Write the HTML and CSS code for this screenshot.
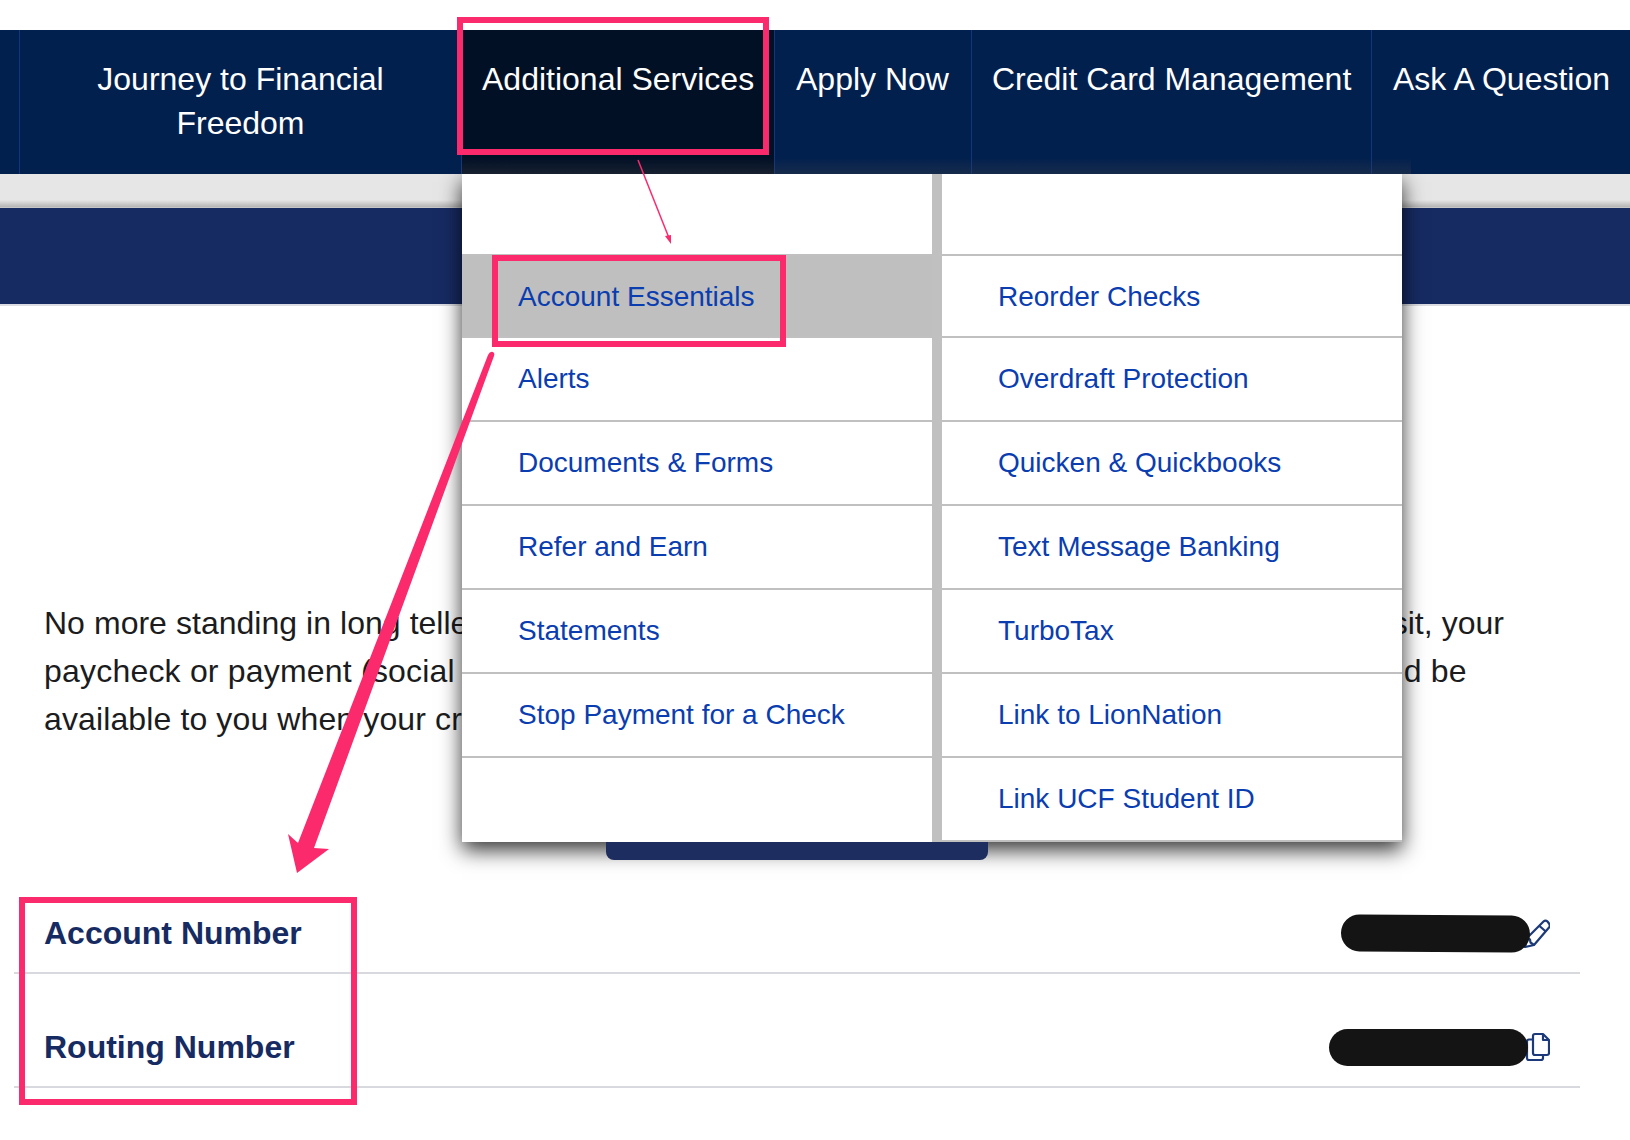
FILE: index.html
```html
<!DOCTYPE html>
<html lang="en">
<head>
  <meta charset="UTF-8">
  <meta name="viewport" content="width=device-width, initial-scale=1.0">
  <title>Account Essentials</title>
  <link rel="stylesheet" href="styles.css">
</head>
<body>
  <nav class="nav">
    <div class="nav-stub"></div>
    <a class="nav-item nav-journey">Journey to Financial Freedom</a>
    <a class="nav-item nav-active">Additional Services</a>
    <a class="nav-item nav-apply">Apply Now</a>
    <a class="nav-item nav-credit">Credit Card Management</a>
    <a class="nav-item nav-last">Ask A Question</a>
  </nav>

  <div class="band"></div>
  <div class="banner"></div>

  <div class="copy">
    <p class="copy-first">No more standing in long teller lines to make your monthly paycheck deposits. With direct deposit, your</p>
    <p class="copy-second">paycheck or payment (social security or pension) goes in your account automatically and should be</p>
    <p class="copy-third">available to you when your credit union opens for business.</p>
  </div>

  <div class="button-row"><a class="setup-button"></a></div>

  <section class="details">
    <div class="detail">
      <span class="detail-label">Account Number</span>
      <span class="detail-value">
        <span class="redact redact-short"></span>
        <svg class="icon icon-pencil" viewBox="0 0 26 30" fill="none" stroke="currentColor" stroke-width="2.2" stroke-linejoin="round">
          <path d="M19.5 3.5 Q21.5 1.5 23.5 3.5 L25 5.5 Q26.5 7.5 25 9.5 L10 27 L1 29 L3 20 Z"/>
          <path d="M15.5 8 L21.8 13.5"/>
          <path d="M3 20 L6 21.5 L6.5 24.5 L10 27"/>
        </svg>
      </span>
    </div>
    <div class="detail">
      <span class="detail-label">Routing Number</span>
      <span class="detail-value">
        <span class="redact redact-long"></span>
        <svg class="icon icon-copy" viewBox="0 0 26 30" fill="none" stroke="currentColor" stroke-width="2.2" stroke-linejoin="round">
          <path d="M11 2 H19 L25 8 V21 Q25 23 23 23 H11 Q9 23 9 21 V4 Q9 2 11 2 Z"/>
          <path d="M19 2 V8 H25"/>
          <path d="M9 7.5 H5 Q3 7.5 3 9.5 V26 Q3 28 5 28 H17 Q19 28 19 26 V23"/>
        </svg>
      </span>
    </div>
  </section>

  <div class="menu">
    <ul class="menu-col">
      <li class="menu-blank"></li>
      <li class="menu-hover"><a>Account Essentials</a></li>
      <li><a>Alerts</a></li>
      <li><a>Documents &amp; Forms</a></li>
      <li><a>Refer and Earn</a></li>
      <li><a>Statements</a></li>
      <li><a>Stop Payment for a Check</a></li>
      <li class="menu-blank-end"></li>
    </ul>
    <ul class="menu-col menu-col-right">
      <li class="menu-blank"></li>
      <li class="menu-first"><a>Reorder Checks</a></li>
      <li><a>Overdraft Protection</a></li>
      <li><a>Quicken &amp; Quickbooks</a></li>
      <li><a>Text Message Banking</a></li>
      <li><a>TurboTax</a></li>
      <li><a>Link to LionNation</a></li>
      <li><a>Link UCF Student ID</a></li>
    </ul>
  </div>

  <!-- markup drawn on top of the screenshot -->
  <svg class="marks" viewBox="0 0 1630 1140">
    <rect x="460" y="20" width="306" height="132" fill="none" stroke="#fb2a6d" stroke-width="6"/>
    <rect x="495" y="258" width="288" height="86" fill="none" stroke="#fb2a6d" stroke-width="6"/>
    <rect x="22" y="900" width="332" height="202" fill="none" stroke="#fb2a6d" stroke-width="6"/>
    <path d="M638 160 L669 238" stroke="#fb2a6d" stroke-width="1.5" fill="none"/>
    <path d="M671 244 L665 236 L671 235 Z" fill="#fb2a6d"/>
    <path d="M488 355 Q490 351 493 352 Q495 353 494 356 L314 848 L329 849 L297 873 L288 834 L298 843 Z" fill="#fb2a6d"/>
  </svg>
</body>
</html>
```

FILE: styles.css
```css
* {
  box-sizing: border-box;
}
body {
  margin: 0;
  height: 1140px;
  overflow: hidden;
  position: relative;
  background-color: #fff;
  color: #1b1c20;
  font-family: "Liberation Sans", Arial, sans-serif;
}
.nav {
  display: flex;
  position: relative;
  z-index: 1;
  height: 144px;
  margin-top: 30px;
  background-color: #02204e;
}
/* greyish haze at the bottom of the bar, above the open menu */
.nav::after {
  content: "";
  position: absolute;
  left: 461px;
  bottom: 0;
  width: 950px;
  height: 16px;
  background: linear-gradient(rgba(70, 70, 70, 0), rgba(70, 70, 70, 0.3));
}
.nav-stub {
  width: 19px;
  flex: none;
}
.nav-item {
  flex: none;
  padding: 27px 0 0 21px;
  border-left: 1.5px solid #12357f;
  color: #fff;
  font-size: 32px;
  line-height: 44px;
  white-space: nowrap;
}
.nav-journey {
  width: 442px;
  padding: 27px 60px 0;
  text-align: center;
  white-space: normal;
}
.nav-active {
  width: 313px;
  padding-left: 20px;
  background-color: #021026;
}
.nav-apply {
  width: 197px;
}
.nav-credit {
  width: 400px;
  padding-left: 20px;
}
.nav-last {
  flex: 1;
}
.band {
  height: 34px;
  background: linear-gradient(#e6e6e6 26px, #b4b4b4 33px, #d8d8d8 34px);
}
.banner {
  height: 98px;
  background-color: #172b63;
  border-bottom: 2px solid #dcdde2;
}
.copy {
  padding: 293px 0 0 44px;
  font-size: 32px;
  line-height: 48px;
  white-space: nowrap;
}
.copy p {
  margin: 0;
}
.copy .copy-first {
  word-spacing: 0.2px;
}
.copy .copy-second {
  letter-spacing: 0.2px;
}
.copy .copy-third {
  letter-spacing: 0.12px;
}
.button-row {
  display: flex;
  justify-content: center;
  padding: 99px 36px 0 0;
}
/* only the part below the open menu shows */
.setup-button {
  display: block;
  position: relative;
  z-index: 1;
  width: 382px;
  height: 18px;
  background-color: #1d2d5f;
  border-radius: 0 0 8px 8px;
}
.details {
  margin: 0 50px 0 14px;
}
.detail {
  display: flex;
  align-items: flex-end;
  justify-content: space-between;
  height: 114px;
  padding: 0 30px 17px 30px;
  border-bottom: 2px solid #d8d9de;
}
.detail-label {
  color: #172b63;
  font-size: 32px;
  font-weight: bold;
  line-height: 44px;
}
.detail-value {
  display: flex;
  align-items: center;
  height: 44px;
  color: #1c3a7a;
}
.redact {
  display: block;
  height: 37px;
  background-color: #141414;
  border-radius: 19px;
  position: relative;
  z-index: 1;
}
.redact-short {
  width: 189px;
  margin-right: -6px;
  transform: rotate(0.4deg);
}
.redact-long {
  width: 199px;
  margin-right: -4px;
}
.icon {
  display: block;
  width: 26px;
  height: 30px;
}
.menu {
  position: absolute;
  top: 174px;
  left: 462px;
  width: 940px;
  height: 668px;
  display: flex;
  background-color: #c0c0c0;
  box-shadow: 0 8px 20px rgba(0, 0, 0, 0.8);
}
.menu-col {
  width: 470px;
  margin: 0;
  padding: 0;
  list-style: none;
  background-color: #fff;
}
.menu-col-right {
  width: 460px;
  margin-left: 10px;
}
.menu-col li {
  display: flex;
  align-items: center;
  height: 84px;
  padding-left: 56px;
  border-bottom: 2px solid #c0c0c0;
  color: #0a3db0;
  font-size: 28px;
}
.menu-col .menu-blank {
  height: 82px;
}
.menu-col .menu-hover,
.menu-col .menu-first {
  height: 82px;
  padding-top: 2px;
}
.menu-col .menu-hover {
  background-color: #bfbfbf;
}
.menu-col .menu-blank-end {
  border-bottom: none;
}
.marks {
  position: absolute;
  z-index: 2;
  top: 0;
  left: 0;
  width: 1630px;
  height: 1140px;
}
```
